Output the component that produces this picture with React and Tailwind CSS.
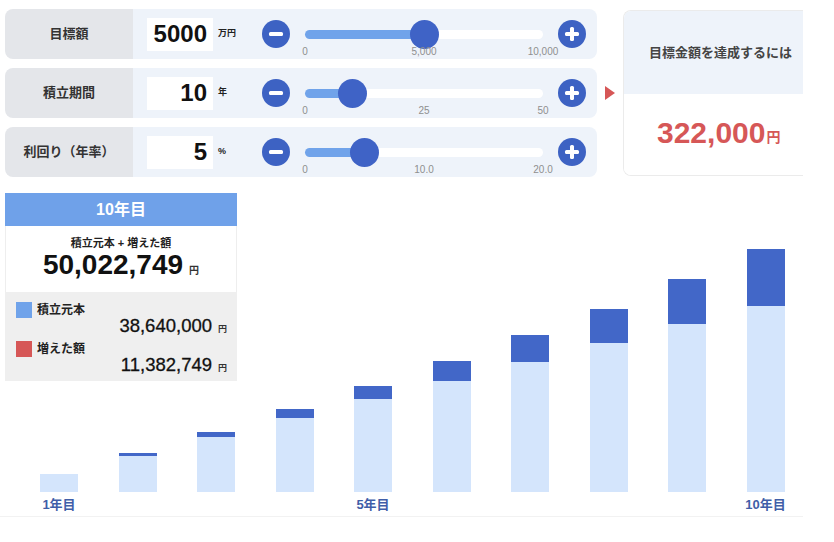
import React from 'react'

const FONT = { fontFamily: '"Liberation Sans", "Noto Sans CJK JP", sans-serif' }

const rows = [
  { label: '目標額', value: '5000', unit: '万円', pct: 0.5, ticks: ['0', '5,000', '10,000'] },
  { label: '積立期間', value: '10', unit: '年', pct: 0.2, ticks: ['0', '25', '50'] },
  { label: '利回り（年率）', value: '5', unit: '%', pct: 0.25, ticks: ['0', '10.0', '20.0'] },
]

// bar heights in px, principal / gain
const principal = [18, 36, 55, 74, 93, 111, 130, 149, 168, 186]
const gain = [0, 3, 5, 9, 13, 20, 27, 34, 45, 57]

function RoundBtn({ plus }) {
  return (
    <svg width="28" height="28" viewBox="0 0 28 28" className="shrink-0">
      <circle cx="14" cy="14" r="14" fill="#3d62c3" />
      <rect x="7" y="12" width="14" height="4" rx="1.5" fill="#fff" />
      {plus && <rect x="12" y="7" width="4" height="14" rx="1.5" fill="#fff" />}
    </svg>
  )
}

function Slider({ pct, ticks }) {
  return (
    <div className="relative w-[238px] h-[50px] shrink-0">
      <div className="absolute left-0 right-0 top-[21px] h-[9px] rounded-full bg-white" />
      <div
        className="absolute left-0 top-[21px] h-[9px] rounded-l-full bg-[#70a3ea]"
        style={{ width: `${pct * 100}%` }}
      />
      <div
        className="absolute top-[11px] w-[29px] h-[29px] -ml-[14.5px] rounded-full bg-[#3f63c6]"
        style={{ left: `${pct * 100}%` }}
      />
      <span className="absolute top-[37px] left-0 -translate-x-1/2 text-[10px] leading-[12px] text-[#8f8f8f]">{ticks[0]}</span>
      <span className="absolute top-[37px] left-1/2 -translate-x-1/2 text-[10px] leading-[12px] text-[#8f8f8f]">{ticks[1]}</span>
      <span className="absolute top-[37px] left-full -translate-x-1/2 text-[10px] leading-[12px] text-[#8f8f8f]">{ticks[2]}</span>
    </div>
  )
}

export default function App() {
  return (
    <div className="w-[803px] overflow-hidden bg-white text-[#333]" style={FONT}>
      <div className="flex items-center pt-[9px] pl-[5px]">
        <div className="flex flex-col gap-[9px] w-[592px] shrink-0">
          {rows.map((r) => (
            <div key={r.label} className="flex h-[50px] rounded-lg overflow-hidden">
              <div className="w-[128px] bg-[#e4e6ea] flex items-center justify-center text-[13px] font-bold text-[#333]">
                {r.label}
              </div>
              <div className="flex-1 bg-[#eef3fa] flex items-center">
                <div className="ml-[14px] w-[66px] h-[33px] bg-white flex items-center justify-end pr-[6px] text-[24px] font-bold text-[#111]">
                  {r.value}
                </div>
                <div className="w-[49px] pl-[5px] text-[9px] font-bold text-[#222]">{r.unit}</div>
                <RoundBtn />
                <div className="ml-[15px]">
                  <Slider pct={r.pct} ticks={r.ticks} />
                </div>
                <div className="ml-[15px]">
                  <RoundBtn plus />
                </div>
              </div>
            </div>
          ))}
        </div>
        <div className="ml-[8px] w-0 h-0 border-y-[7px] border-y-transparent border-l-[10px] border-l-[#d65757]" />
        <div className="ml-[8px] w-[200px] h-[166px] shrink-0 rounded-l-lg border border-r-0 border-[#ebebeb] overflow-hidden flex flex-col">
          <div className="h-[83px] bg-[#eef3fa] flex items-center pl-[25px] text-[13px] font-bold text-[#444]">
            目標金額を達成するには
          </div>
          <div className="flex-1 bg-white flex items-center pl-[33px] pb-[4px]">
            <span className="text-[30px] font-bold text-[#d65757]">322,000</span>
            <span className="text-[14px] font-bold text-[#d65757] mt-[10px] ml-[1px]">円</span>
          </div>
        </div>
      </div>

      <div className="relative mt-[8px] h-[332px] border-b border-[#f2f2f2]">
        <div className="absolute top-[8px] left-[5px] w-[232px] flex flex-col">
          <div className="h-[33px] bg-[#6fa1e9] flex items-center justify-center text-white text-[16px] font-bold">
            10年目
          </div>
          <div className="h-[66px] bg-white border-x border-[#eee] flex flex-col items-center pt-[10px]">
            <div className="text-[11px] font-bold text-[#222] leading-[14px]">積立元本 + 増えた額</div>
            <div className="flex items-baseline leading-[30px]">
              <span className="text-[28px] font-bold text-[#111]">50,022,749</span>
              <span className="text-[10px] font-bold ml-[6px]">円</span>
            </div>
          </div>
          <div className="h-[89px] bg-[#efefef] pl-[11px] pr-[11px] pt-[10px]">
            <div className="flex items-center gap-[5px] h-[16px]">
              <div className="w-[16px] h-[16px] bg-[#70a3ea]" />
              <span className="text-[12px] font-bold text-[#222]">積立元本</span>
            </div>
            <div className="flex justify-end items-baseline h-[22px] leading-[16px]">
              <span className="text-[18.5px] text-[#111] [-webkit-text-stroke:0.3px_#111]">38,640,000</span>
              <span className="text-[9px] font-bold ml-[6px] w-[8px]">円</span>
            </div>
            <div className="flex items-center gap-[5px] h-[16px] mt-[1px]">
              <div className="w-[16px] h-[16px] bg-[#d65757]" />
              <span className="text-[12px] font-bold text-[#222]">増えた額</span>
            </div>
            <div className="flex justify-end items-baseline h-[22px] leading-[16px]">
              <span className="text-[18.5px] text-[#111] [-webkit-text-stroke:0.3px_#111]">11,382,749</span>
              <span className="text-[9px] font-bold ml-[6px] w-[8px]">円</span>
            </div>
          </div>
        </div>

        <div className="flex gap-[40.5px] pl-[40px] pt-[57px]">
          {principal.map((p, i) => (
            <div key={i} className="w-[38px] flex flex-col">
              <div className="h-[250px] flex flex-col justify-end">
                <div className="bg-[#4267c8]" style={{ height: gain[i] }} />
                <div className="bg-[#d4e5fc]" style={{ height: p }} />
              </div>
              <div className="h-[25px] flex items-center justify-center whitespace-nowrap text-[13px] font-bold text-[#3f5ea8]">
                {i === 0 || i === 4 || i === 9 ? `${i + 1}年目` : ''}
              </div>
            </div>
          ))}
        </div>
      </div>
    </div>
  )
}
